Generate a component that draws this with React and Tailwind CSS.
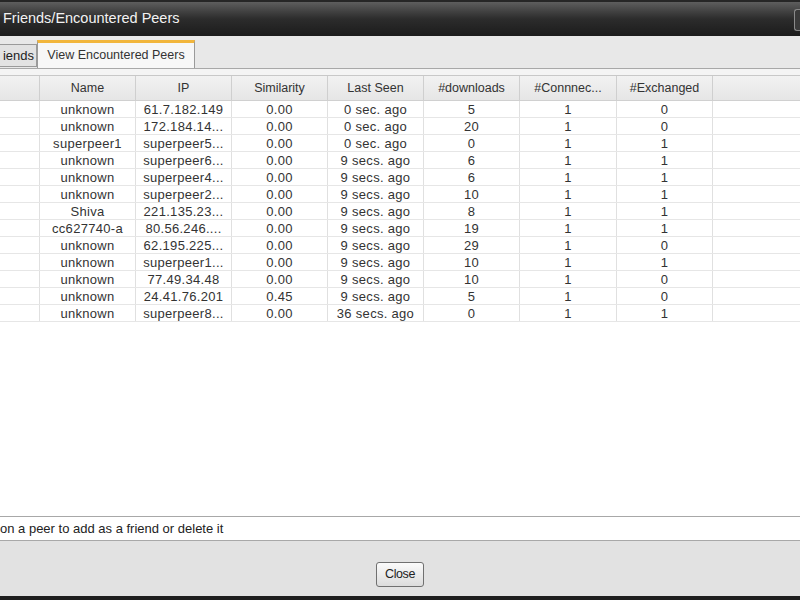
const columns = [
    { key: 'sel', label: '', w: 'w-[40px]' },
    { key: 'name', label: 'Name', w: 'w-[96px]' },
    { key: 'ip', label: 'IP', w: 'w-[96px]' },
    { key: 'sim', label: 'Similarity', w: 'w-[96px]' },
    { key: 'seen', label: 'Last Seen', w: 'w-[96px]' },
    { key: 'dl', label: '#downloads', w: 'w-[96px]' },
    { key: 'conn', label: '#Connnec...', w: 'w-[97px]' },
    { key: 'ex', label: '#Exchanged', w: 'w-[96px]' },
];

const peers = [
    ['unknown', '61.7.182.149', '0.00', '0 sec. ago', '5', '1', '0'],
    ['unknown', '172.184.14...', '0.00', '0 sec. ago', '20', '1', '0'],
    ['superpeer1', 'superpeer5...', '0.00', '0 sec. ago', '0', '1', '1'],
    ['unknown', 'superpeer6...', '0.00', '9 secs. ago', '6', '1', '1'],
    ['unknown', 'superpeer4...', '0.00', '9 secs. ago', '6', '1', '1'],
    ['unknown', 'superpeer2...', '0.00', '9 secs. ago', '10', '1', '1'],
    ['Shiva', '221.135.23...', '0.00', '9 secs. ago', '8', '1', '1'],
    ['cc627740-a', '80.56.246....', '0.00', '9 secs. ago', '19', '1', '1'],
    ['unknown', '62.195.225...', '0.00', '9 secs. ago', '29', '1', '0'],
    ['unknown', 'superpeer1...', '0.00', '9 secs. ago', '10', '1', '1'],
    ['unknown', '77.49.34.48', '0.00', '9 secs. ago', '10', '1', '0'],
    ['unknown', '24.41.76.201', '0.45', '9 secs. ago', '5', '1', '0'],
    ['unknown', 'superpeer8...', '0.00', '36 secs. ago', '0', '1', '1'],
];

const App = () => {
    return (
        <div className="w-[800px] h-[600px] flex flex-col overflow-hidden bg-[#e3e3e3] font-['Liberation_Sans',Arial,sans-serif] text-[#222]">
            {/* title bar */}
            <div className="h-[36px] shrink-0 flex items-center justify-between border-t-2 border-[#262626] bg-gradient-to-b from-[#5e5e5e] via-[#2c2c2c] to-[#1c1c1c]">
                <span className="pl-[3px] text-[14.5px] text-[#f2f2f2]">Friends/Encountered Peers</span>
                <div className="w-[6px] h-[22px] mt-[2px] rounded-l-[3px] border border-r-0 border-[#8a8a8a] bg-[#3a3a3a]" />
            </div>

            {/* tabs */}
            <div className="h-[32px] shrink-0 flex items-end bg-[#e8e8e8]">
                <div className="h-[23px] w-[37px] mb-[1px] flex items-center justify-end pr-[2px] border border-l-0 border-[#9a9a9a] bg-[#e2e2e2] text-[13px]">
                    iends
                </div>
                <div className="h-[28px] w-[158px] flex items-center justify-center border-x border-[#9a9a9a] border-t-[3px] border-t-[#f2b63c] bg-[#f7f7f7] text-[12.5px] text-[#333]">
                    View Encountered Peers
                </div>
            </div>

            {/* panel */}
            <div className="flex-1 flex flex-col bg-white border-t border-[#a8a8a8]">
                <div className="h-[7px] shrink-0 bg-[#f4f4f4] border-b border-[#c8c8c8]" />
                <div className="h-[25px] shrink-0 flex bg-gradient-to-b from-[#f2f2f2] to-[#e6e6e6] border-b border-[#d0d0d0]">
                    {columns.map((c) => (
                        <div key={c.key} className={`${c.w} shrink-0 flex items-center justify-center border-r border-[#cfcfcf] text-[12.5px] text-[#333]`}>
                            {c.label}
                        </div>
                    ))}
                </div>
                {peers.map((row, i) => (
                    <div key={i} className="h-[17px] shrink-0 flex border-b border-[#e6e6e6]">
                        <div className="w-[40px] shrink-0 border-r border-[#e0e0e0]" />
                        {row.map((cell, j) => (
                            <div key={j} className={`${columns[j + 1].w} shrink-0 flex items-center justify-center border-r border-[#e0e0e0] text-[13px] tracking-[0.3px] leading-none text-[#333]`}>
                                {cell}
                            </div>
                        ))}
                    </div>
                ))}
                <div className="flex-1" />
            </div>

            {/* status */}
            <div className="h-[25px] shrink-0 flex items-center border-y border-[#a8a8a8] bg-white text-[13px] text-[#222]">
                on a peer to add as a friend or delete it
            </div>

            {/* footer */}
            <div className="h-[55px] shrink-0 flex items-start justify-center pt-[21px] bg-[#e2e2e2]">
                <button className="w-[48px] h-[25px] rounded-[3px] border border-[#707070] bg-gradient-to-b from-[#fbfbfb] to-[#dcdcdc] text-[12.5px] tracking-[-0.4px] text-[#222]">
                    Close
                </button>
            </div>
            <div className="h-[4px] shrink-0 bg-[#1e1e1e]" />
        </div>
    );
};

export default App;
